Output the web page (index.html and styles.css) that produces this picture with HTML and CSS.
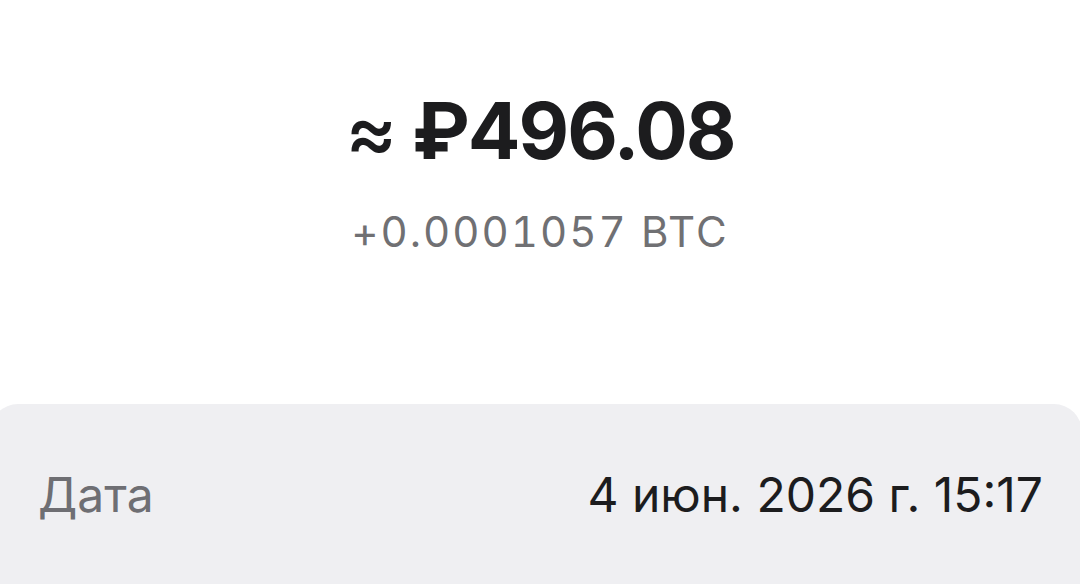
FILE: index.html
```html
<!DOCTYPE html>
<html lang="ru">
<head>
    <meta charset="UTF-8">
    <meta name="viewport" content="width=device-width, initial-scale=1.0">
    <title>Транзакция</title>
    <link rel="stylesheet" href="styles.css">
</head>
<body>
    <div class="summary">
        <div class="amount"><span class="approx">≈</span> ₽496.08</div>
        <div class="crypto">+0.0001057 BTC</div>
    </div>

    <div class="details">
        <div class="row">
            <span class="label">Дата</span>
            <span class="value">4 июн. 2026 г. 15:17</span>
        </div>
    </div>
</body>
</html>
```

FILE: styles.css
```css
body {
    font-family: Inter, "Noto Sans", sans-serif;
    background-color: #ffffff;
    color: #1c1c1e;
    margin: 0;
    padding: 0;
    height: 100vh;
    overflow: hidden;
    display: flex;
    flex-direction: column;
}

.summary {
    padding-top: 84px;
    text-align: center;
}

.amount {
    font-size: 78px;
    line-height: 94px;
    font-weight: 700;
    letter-spacing: -2px;
    color: #1c1c1e;
}

.approx {
    font-weight: 500;
}

.crypto {
    margin-top: 29px;
    font-size: 42px;
    line-height: 50px;
    letter-spacing: 2px;
    font-variant-numeric: tabular-nums;
    color: #707073;
}

.details {
    flex: 1;
    margin: 147px -2px 0 -10px;
    padding: 62px 39px 0 48px;
    background-color: #efeff2;
    border-radius: 28px 28px 0 0;
}

.row {
    display: flex;
    justify-content: space-between;
    font-size: 48px;
    line-height: 58px;
}

.label {
    color: #6e6e73;
}

.value {
    color: #1c1c1e;
}
```
